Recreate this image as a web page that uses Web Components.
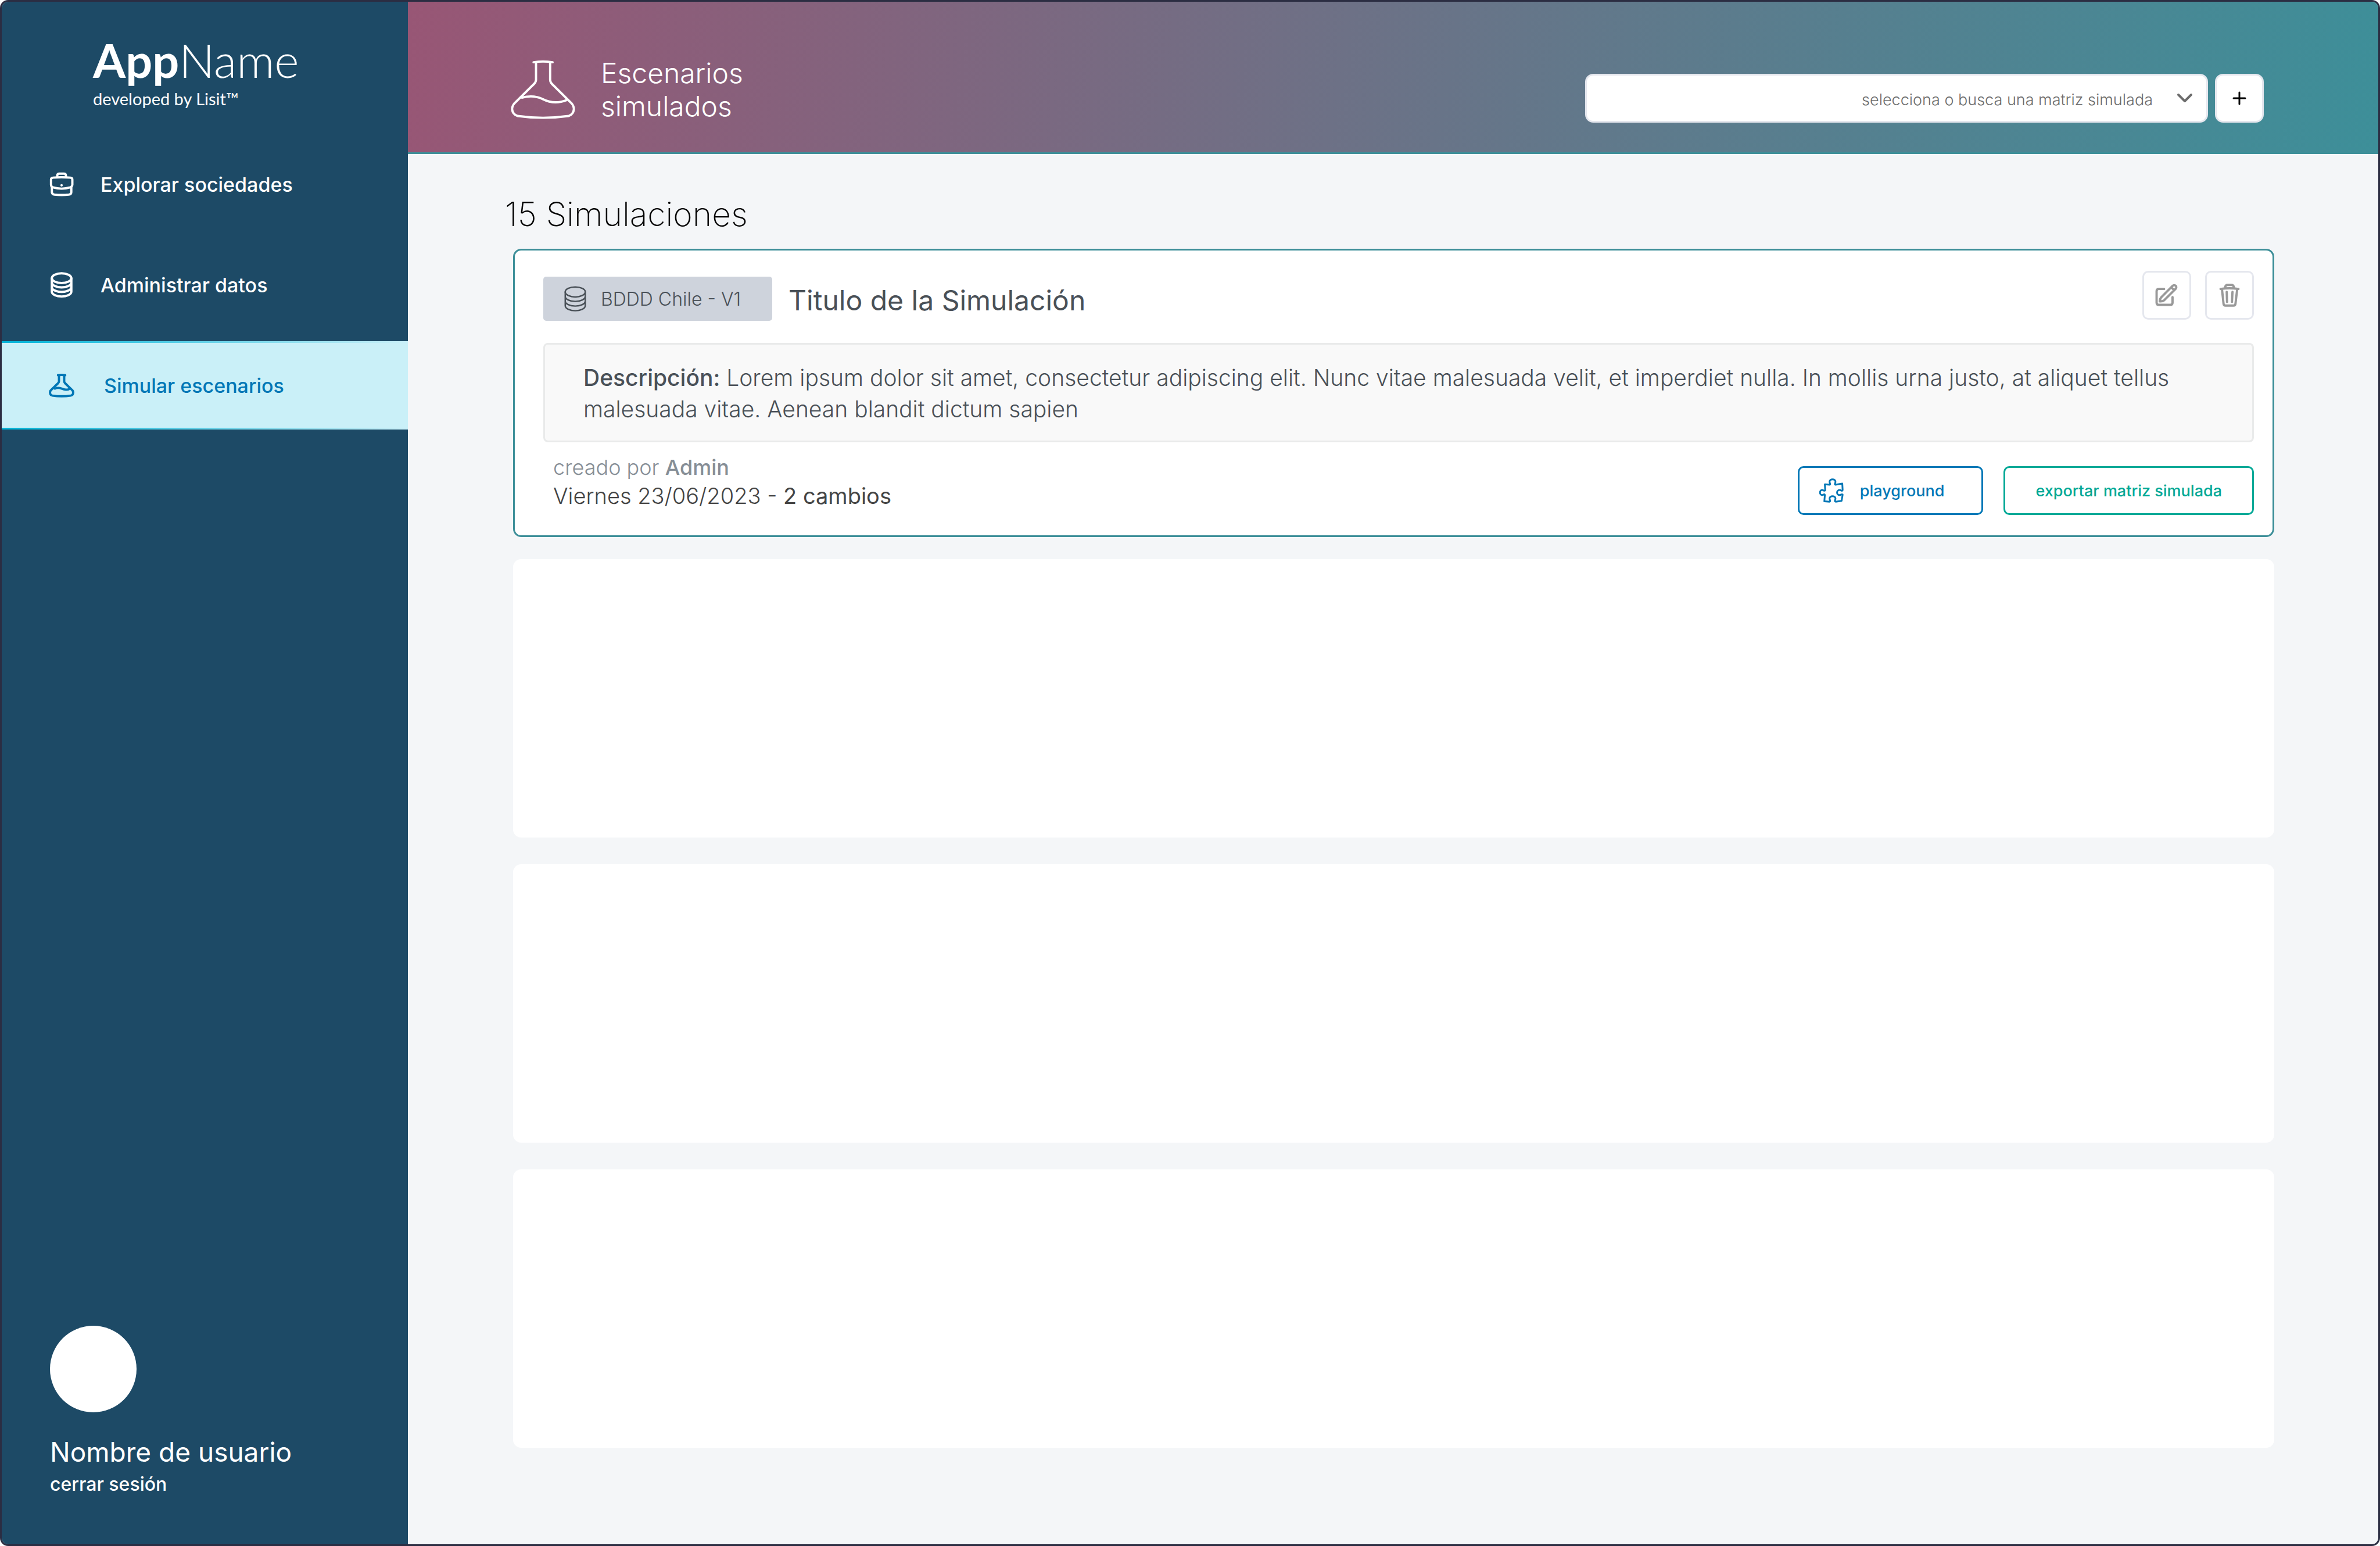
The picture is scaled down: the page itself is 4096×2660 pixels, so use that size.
<!DOCTYPE html>
<html lang="es">
<head>
<meta charset="utf-8">
<title>Escenarios simulados</title>
<style>
  html, body { margin: 0; background: #fff; }
  body { font-family: Inter, "Liberation Sans", sans-serif; }
</style>
</head>
<body>
<app-shell>
  <side-bar slot="side">
    <nav-item icon="briefcase">Explorar sociedades</nav-item>
    <nav-item icon="database">Administrar datos</nav-item>
    <nav-item icon="flask" active>Simular escenarios</nav-item>
    <user-panel slot="user" name="Nombre de usuario"></user-panel>
  </side-bar>
  <page-header>
    <span slot="title">Escenarios<br>simulados</span>
    <matrix-picker slot="tools"></matrix-picker>
  </page-header>
  <simulation-list heading="15 Simulaciones">
    <simulation-card>
      <span slot="base">BDDD Chile - V1</span>
      <span slot="title">Titulo de la Simulación</span>
      <span slot="description">Lorem ipsum dolor sit amet, consectetur adipiscing elit. Nunc vitae malesuada velit, et imperdiet nulla. In mollis urna justo, at aliquet tellus malesuada vitae. Aenean blandit dictum sapien</span>
      <span slot="author">Admin</span>
      <span slot="date">Viernes 23/06/2023</span>
      <span slot="changes">2 cambios</span>
    </simulation-card>
    <empty-card></empty-card>
    <empty-card></empty-card>
    <empty-card></empty-card>
  </simulation-list>
</app-shell>

<script>
const define = (name, render) => customElements.define(name, class extends HTMLElement {
  constructor() {
    super();
    this.attachShadow({ mode: 'open' });
  }
  connectedCallback() {
    this.shadowRoot.innerHTML = render(this);
  }
});

const DATABASE = '<ellipse cx="81" cy="46" rx="56" ry="28"/><path d="M25 46V123A56 28 0 0 0 137 123V46M25 71A56 28 0 0 0 137 71M25 97A56 28 0 0 0 137 97"/>';

const ICONS = {
  briefcase: { box: '1 0 160 154', w: 48, h: 46, stroke: 13, art: '<path d="M56 33V25Q58 16 67 16H95Q104 16 106 25V33"/><path d="M20 50Q20 40 32 39Q81 35 131 39Q143 40 143 50V80Q142 91 130 95Q81 110 32 95Q20 91 20 80Z"/><path d="M25 95V123Q26 135 40 137Q81 141 122 137Q137 135 137 123V95"/><circle cx="81" cy="83" r="7" fill="currentColor" stroke="none"/>' },
  database: { box: '1 4 160 160', w: 48, h: 48, stroke: 13, art: DATABASE },
  databaseThin: { box: '16 10 130 148', w: 40, h: 46, stroke: 8, art: DATABASE },
  flask: { box: '1 0 160 150', w: 48, h: 45, stroke: 13, art: '<path d="M60 15Q81 12 102 15"/><path d="M66 17V50Q66 55 62 60L18 103Q12 112 16 122Q18 130 28 132Q81 140 134 132Q144 130 146 122Q150 112 144 103L100 60Q96 55 96 50V17"/><path d="M42 92Q62 84 81 92Q100 102 122 96"/>' },
  flaskLarge: { box: '40 42 370 342', w: 111, h: 103, stroke: 13, art: '<path d="M171 55Q225 47 280 55"/><path d="M185 58V155Q185 168 175 178L60 292Q48 305 48 325Q50 352 78 363Q225 384 373 363Q400 352 402 325Q402 305 390 292L275 178Q266 168 266 155V58"/><path d="M104 258Q170 240 225 267Q290 300 361 272"/>' },
  trash: { box: '0 0 126 146', w: 38, h: 44, stroke: 13, art: '<path d="M12 37Q63 29 114 37M38 32V27Q40 14 52 14H74Q86 14 88 27V32M20 38L29 122Q30 132 40 132H86Q96 132 97 122L107 38M47 54L49 111M80 54L77 111"/>' },
  edit: { box: '0 0 146 146', w: 44, h: 44, stroke: 13, art: '<path d="M58 37H28Q15 37 15 50V115Q15 128 28 128H92Q106 128 106 115V84"/><path d="M33 108Q34 92 42 84L107 19A12 12 0 0 1 124 36L59 101Q50 109 33 108ZM99 28L114 43"/>' },
  puzzle: { box: '5 5 140 140', w: 42, h: 42, stroke: 10, art: '<path d="M37 39L64 42C72 40 64 33 64 25C64 6 98 6 98 25C98 33 90 40 98 42L137 35L139 73C136 82 130 72 122 72C102 72 102 101 122 101C130 101 136 92 139 99L133 134L99 139C90 136 98 129 98 121C98 103 64 103 64 121C64 129 72 136 64 139L34 137L37 100C34 92 28 101 22 101C5 101 5 72 22 72C28 72 36 80 39 74Z"/>' },
  chevron: { box: '0 0 30 20', w: 30, h: 20, stroke: 4, art: '<path d="M4 4L15 15L26 4"/>' },
  plus: { box: '0 0 24 24', w: 24, h: 24, stroke: 3, art: '<path d="M12 2V22M2 12H22"/>' }
};

define('ui-icon', el => {
  const i = ICONS[el.getAttribute('name')];
  return `<style>
    :host { display: block; flex: none; }
    svg { display: block; }
  </style>
  <svg width="${i.w}" height="${i.h}" viewBox="${i.box}" fill="none" stroke="currentColor" stroke-width="${i.stroke}" stroke-linecap="round" stroke-linejoin="round" aria-hidden="true">${i.art}</svg>`;
});

define('app-shell', () => `<style>
    :host {
      display: grid; grid-template-columns: 699px 1fr;
      min-height: 100vh; box-sizing: border-box; overflow: hidden;
      border: 3px solid #2b2d42; border-radius: 14px; background: #f4f6f8;
    }
    main { display: flex; flex-direction: column; min-width: 0; }
  </style>
  <slot name="side"></slot>
  <main><slot></slot></main>`);

define('side-bar', () => `<style>
    :host {
      display: flex; flex-direction: column; box-sizing: border-box;
      padding: 51px 0 83px; background: #1d4a66; color: #fff;
    }
    .logo { padding-left: 157px; font-family: Lato, "Liberation Sans", sans-serif; }
    .name { font-size: 81px; line-height: 98px; font-weight: 300; }
    .name b { font-weight: 700; }
    .by { font-size: 29px; line-height: 36px; }
    nav { display: flex; flex-direction: column; gap: 21px; margin-top: 53px; }
    ::slotted(user-panel) { margin-top: auto; }
  </style>
  <div class="logo">
    <div class="name"><b>App</b>Name</div>
    <div class="by">developed by Lisit™</div>
  </div>
  <nav><slot></slot></nav>
  <slot name="user"></slot>`);

define('nav-item', el => `<style>
    :host { display: block; }
    a {
      display: flex; align-items: center; gap: 43px;
      box-sizing: border-box; height: 152px; padding-left: 79px;
      font-size: 34px; font-weight: 500; color: #fff; text-decoration: none;
    }
    :host([active]) a {
      gap: 49px; color: #0077b6; background: #caf0f8;
      border: solid; border-width: 3px 0;
      border-image: linear-gradient(90deg, #00b4d8, #caf0f8) 1;
    }
  </style>
  <a href="#"><ui-icon name="${el.getAttribute('icon')}"></ui-icon><span><slot></slot></span></a>`);

define('user-panel', el => `<style>
    :host { display: block; padding-left: 83px; }
    .avatar { width: 149px; height: 149px; border-radius: 50%; background: #fff; }
    .name { margin-top: 40px; font-size: 46px; line-height: 56px; }
    a { display: block; margin-top: 8px; font-size: 32px; line-height: 40px; font-weight: 500; color: #fff; text-decoration: none; }
  </style>
  <div class="avatar"></div>
  <div class="name">${el.getAttribute('name')}</div>
  <a href="#">cerrar sesión</a>`);

define('page-header', () => `<style>
    :host {
      display: flex; align-items: flex-end; justify-content: space-between;
      padding: 94px 197px 51px 177px; color: #fff;
      border-bottom: 3px solid #3d8f99;
      background: linear-gradient(100deg, #985675, #3d8f99) border-box;
    }
    .title { display: flex; align-items: center; gap: 44px; }
    h1 { margin: 0; font-size: 48px; line-height: 57px; font-weight: 300; }
  </style>
  <div class="title"><ui-icon name="flaskLarge"></ui-icon><h1><slot name="title"></slot></h1></div>
  <slot name="tools"></slot>`);

define('matrix-picker', () => `<style>
    :host { display: flex; gap: 12px; }
    .field { display: grid; align-items: center; width: 1072px; }
    .field > * { grid-area: 1 / 1; }
    select, button {
      box-sizing: border-box; height: 84px; margin: 0;
      border: 3px solid #e5e7ee; border-radius: 14px; background: #fff; font-family: inherit;
    }
    select {
      appearance: none; width: 100%; padding: 4px 92px 0 32px;
      font-size: 27px; font-weight: 300; color: #6c6c6c; text-align-last: right;
    }
    ui-icon { justify-self: end; margin-right: 25px; color: #6c6c6c; pointer-events: none; }
    button { display: grid; place-items: center; width: 84px; padding: 0; }
    button ui-icon { margin: 0; justify-self: center; color: #000; }
  </style>
  <div class="field">
    <select aria-label="Matriz simulada"><option>selecciona o busca una matriz simulada</option></select>
    <ui-icon name="chevron"></ui-icon>
  </div>
  <button type="button" aria-label="Agregar"><ui-icon name="plus"></ui-icon></button>`);

define('simulation-list', el => `<style>
    :host { display: block; padding: 68px 179px 0 167px; }
    h2 { margin: 0; font-size: 57px; line-height: 72px; font-weight: 200; color: #000; }
    .list { margin: 23px 0 0 14px; }
  </style>
  <h2>${el.getAttribute('heading')}</h2>
  <div class="list"><slot></slot></div>`);

define('simulation-card', () => `<style>
    :host {
      display: block; margin-bottom: 38px; padding: 35px 32px 35px 49px;
      border: 3px solid #3d8f99; border-radius: 14px; background: #fff; color: #495057;
    }
    .top { display: flex; align-items: flex-end; gap: 28px; height: 86px; }
    .base {
      display: flex; align-items: center; gap: 24px; box-sizing: border-box;
      height: 76px; padding: 0 54px 0 35px; border-radius: 5px;
      background: #ced3dc; font-size: 32px; font-weight: 300;
    }
    h3 { flex: 1; margin: 0; font-size: 48px; line-height: 70px; font-weight: 400; }
    .tools { display: flex; gap: 24px; align-self: flex-start; }
    button {
      display: flex; align-items: center; justify-content: center;
      box-sizing: border-box; height: 84px; margin: 0; padding: 0;
      border: 3px solid #e5e7ee; border-radius: 10px; background: #fff;
      font-family: inherit; font-size: 27px; font-weight: 500; color: #999;
    }
    .tools button { width: 84px; }
    p {
      margin: 38px 0 0; padding: 30px 66px 27px;
      border: 3px solid #e9eaea; border-radius: 8px; background: #f9f9f9;
      font-size: 39px; line-height: 54px; font-weight: 300;
    }
    p b { font-weight: 500; }
    .foot { display: flex; align-items: flex-end; gap: 35px; margin-top: 19px; height: 106px; }
    .meta { flex: 1; align-self: flex-start; padding-left: 17px; font-size: 38px; line-height: 49px; font-weight: 300; color: #444; }
    .meta b { font-weight: 400; }
    .by { font-size: 36px; color: #868e96; }
    .by b { font-weight: 500; }
    .play { gap: 28px; padding: 0 64px 0 34px; border-color: #0077b6; color: #0077b6; }
    .export { padding: 0 52px; border-color: #00a896; color: #00a896; }
  </style>
  <div class="top">
    <div class="base"><ui-icon name="databaseThin"></ui-icon><slot name="base"></slot></div>
    <h3><slot name="title"></slot></h3>
    <div class="tools">
      <button type="button" aria-label="Editar"><ui-icon name="edit"></ui-icon></button>
      <button type="button" aria-label="Eliminar"><ui-icon name="trash"></ui-icon></button>
    </div>
  </div>
  <p><b>Descripción:</b> <slot name="description"></slot></p>
  <div class="foot">
    <div class="meta">
      <div class="by">creado por <b><slot name="author"></slot></b></div>
      <div><slot name="date"></slot> - <b><slot name="changes"></slot></b></div>
    </div>
    <button type="button" class="play"><ui-icon name="puzzle"></ui-icon>playground</button>
    <button type="button" class="export">exportar matriz simulada</button>
  </div>`);

define('empty-card', () => `<style>
    :host { display: block; height: 479px; margin-bottom: 46px; border-radius: 14px; background: #fff; }
  </style>`);
</script>
</body>
</html>
